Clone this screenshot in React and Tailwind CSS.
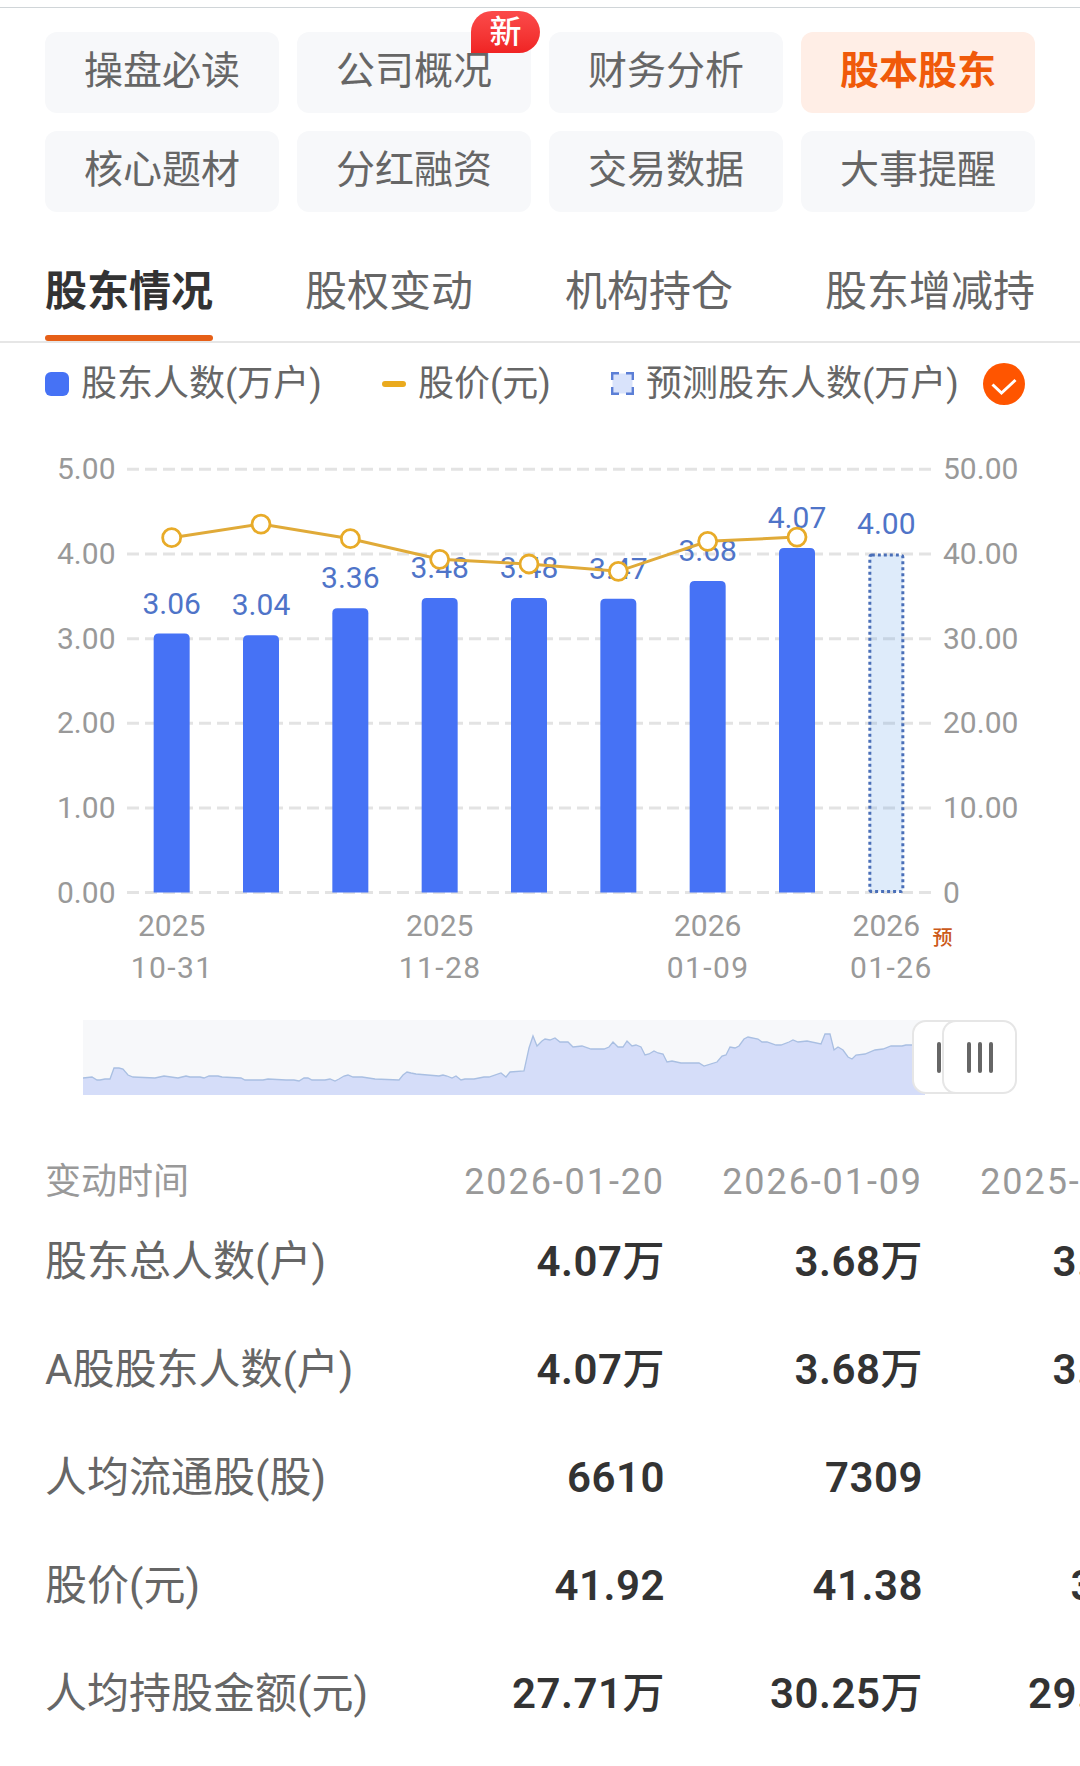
import { clsx } from "clsx";

const MENU = [
  { label: "操盘必读" },
  { label: "公司概况", isNew: true },
  { label: "财务分析" },
  { label: "股本股东", active: true },
  { label: "核心题材" },
  { label: "分红融资" },
  { label: "交易数据" },
  { label: "大事提醒" },
];

const TABS = ["股东情况", "股权变动", "机构持仓", "股东增减持"];

const POINTS = [
  { count: 3.06, price: 41.93, date: ["2025", "10-31"] },
  { count: 3.04, price: 43.54 },
  { count: 3.36, price: 41.81 },
  { count: 3.48, price: 39.37, date: ["2025", "11-28"] },
  { count: 3.48, price: 38.82 },
  { count: 3.47, price: 37.95 },
  { count: 3.68, price: 41.5, date: ["2026", "01-09"] },
  { count: 4.07, price: 42.0 },
];

const TABLE = [
  { label: "股东总人数(户)", values: ["4.07", "3.68", "3.47"], unit: "万" },
  { label: "A股股东人数(户)", values: ["4.07", "3.68", "3.47"], unit: "万" },
  { label: "人均流通股(股)", values: ["6610", "7309", "7752"] },
  { label: "股价(元)", values: ["41.92", "41.38", "37.95"] },
  { label: "人均持股金额(元)", values: ["27.71", "30.25", "29.42"], unit: "万" },
];

const HISTORY =
  "0,58 9,57 14,60 17,60 22,59 27,59 31,48 36,48 40,49 45,55 50,57 72,58 81,56 95,58 103,56 107,57 117,57 121,58 126,56 135,56 139,57 158,58 162,60 180,60 185,59 203,60 211,60 216,61 221,58 225,58 229,60 242,60 247,59 252,61 256,59 261,56 265,55 270,57 279,57 292,59 316,60 320,55 324,52 328,53 333,54 356,56 360,55 364,56 369,58 373,56 378,60 382,59 391,59 401,57 406,57 418,53 423,57 427,52 441,51 446,28 450,16 454,26 459,21 462,19 467,20 472,18 477,22 485,22 490,27 499,26 508,29 521,29 526,27 530,22 535,27 540,27 544,21 549,26 553,25 558,27 562,35 566,34 571,31 575,33 580,34 584,42 589,41 598,43 616,43 621,46 634,42 639,36 643,35 647,27 652,28 656,26 661,19 665,17 675,19 679,22 684,22 693,25 698,25 706,22 710,20 715,22 724,21 738,24 742,14 747,14 751,30 755,27 760,30 765,37 769,39 773,35 782,34 792,30 800,29 808,26 819,26 823,25 842,25";

// chart geometry
const LEFT = 127;
const RIGHT = 931;
const BASE = 472.6;
const UNIT = 84.65;
const STEP = (RIGHT - LEFT) / 9;

const cx = (i) => LEFT + STEP * (i + 0.5);
const cy = (v) => BASE - v * UNIT;

function Menu() {
  return (
    <div className="grid grid-cols-4 gap-[18px] px-[45px] pt-6">
      {MENU.map((m) => (
        <div
          key={m.label}
          className={clsx(
            "relative flex h-[81px] items-center justify-center rounded-xl pb-0.5 text-[39px] leading-none",
            m.active ? "bg-[#ffeee6] font-bold text-[#f05a0a]" : "bg-[#f7f8fa] text-[#666]"
          )}
        >
          {m.label}
          {m.isNew && (
            <span className="absolute -top-[21px] -right-[9px] flex h-[42px] w-[69px] items-center justify-center rounded-[21px] rounded-bl-none bg-gradient-to-b from-[#fb4a4a] to-[#f02323] text-[32px] font-medium text-white">
              新
            </span>
          )}
        </div>
      ))}
    </div>
  );
}

function Tabs() {
  return (
    <div className="mt-[43px] flex h-[88px] justify-between border-b-2 border-[#e6e6e6] px-[45px]">
      {TABS.map((t, i) => (
        <div key={t} className="flex flex-col justify-between text-[42px]">
          <span className={clsx("pt-4 leading-[42px]", i === 0 ? "font-bold text-[#333]" : "text-[#666]")}>{t}</span>
          {i === 0 && <span className="h-[6px] rounded-full bg-[#e65f17]" />}
        </div>
      ))}
    </div>
  );
}

function Legend() {
  return (
    <div className="flex h-[77px] items-center pt-1 pl-[45px] text-[36px] leading-none text-[#666]">
      <span className="h-6 w-6 rounded-md bg-[#4672f5]" />
      <span className="ml-3 w-[301px]">股东人数(万户)</span>
      <span className="h-[6px] w-6 rounded-full bg-[#eaaa1e]" />
      <span className="ml-3 w-[193px]">股价(元)</span>
      <svg width="23" height="23" viewBox="0 0 23 23">
        <rect x="1.5" y="1.5" width="20" height="20" fill="#d9e3fb" />
        <path d="M1.2 8V1.2H8M15 1.2h6.8V8M21.8 15v6.8H15M8 21.8H1.2V15" fill="none" stroke="#5c7fd6" strokeWidth="2.4" />
      </svg>
      <span className="ml-3 w-[337px]">预测股东人数(万户)</span>
      <svg width="42" height="42" viewBox="0 0 42 42">
        <circle cx="21" cy="21" r="21" fill="#ff5500" />
        <path d="M9.5 21.5L18.5 30L32.5 17" fill="none" stroke="#fff" strokeWidth="3" />
      </svg>
    </div>
  );
}

function Chart() {
  return (
    <svg width="1080" height="580" viewBox="0 0 1080 580" className="block" fontSize="30" fill="#999">
      {[0, 1, 2, 3, 4, 5].map((v) => (
        <g key={v}>
          <line x1={LEFT} x2={RIGHT} y1={cy(v)} y2={cy(v)} stroke="#e3e3e3" strokeWidth="3" strokeDasharray="12 6" />
          <text x="115.5" y={cy(v) + 10} textAnchor="end">{v.toFixed(2)}</text>
          <text x="943" y={cy(v) + 10}>{v === 0 ? "0" : (v * 10).toFixed(2)}</text>
        </g>
      ))}

      {POINTS.map((p, i) => (
        <g key={i}>
          <path
            d={`M${cx(i) - 18} ${BASE}V${cy(p.count) + 5}q0 -5 5 -5h26q5 0 5 5V${BASE}z`}
            fill="#4672f5"
          />
          <text x={cx(i)} y={cy(p.count) - 20} textAnchor="middle" fill="#4f74c8">{p.count.toFixed(2)}</text>
          {p.date && (
            <g textAnchor="middle">
              <text x={cx(i)} y="516">{p.date[0]}</text>
              <text x={cx(i) + 0.5} y="558" letterSpacing="1.4">{p.date[1]}</text>
            </g>
          )}
        </g>
      ))}

      {/* forecast */}
      <rect x={cx(8) - 16.5} y={cy(4) + 1} width="33" height={4 * UNIT - 2} rx="2" fill="#4a90e2" fillOpacity="0.18" stroke="#4a6fb8" strokeWidth="3" strokeDasharray="3 3" />
      <text x={cx(8)} y={cy(4) - 20} textAnchor="middle" fill="#4f74c8">4.00</text>
      <g textAnchor="middle">
        <text x={cx(8)} y="516">2026</text>
        <text x={cx(8) + 5} y="558" letterSpacing="1.4">01-26</text>
      </g>
      <text x="932.5" y="524.5" fontSize="20" fill="#cc5a1a" fontWeight="500">预</text>

      <polyline points={POINTS.map((p, i) => `${cx(i)},${cy(p.price / 10)}`).join(" ")} fill="none" stroke="#e0aa38" strokeWidth="3" />
      {POINTS.map((p, i) => (
        <circle key={i} cx={cx(i)} cy={cy(p.price / 10)} r="9" fill="#fff" stroke="#e8ab28" strokeWidth="2.8" />
      ))}
    </svg>
  );
}

function Handle({ className }) {
  return (
    <div className={clsx("absolute top-0 flex h-[74px] w-[75px] items-center justify-center gap-[7px] rounded-[14px] border-2 border-[#e6e6e6] bg-white", className)}>
      <span className="h-[31px] w-1 rounded-full bg-[#666]" />
      <span className="h-[31px] w-1 rounded-full bg-[#666]" />
      <span className="h-[31px] w-1 rounded-full bg-[#666]" />
    </div>
  );
}

function RangeSlider() {
  return (
    <div className="relative mt-5 ml-[83px] h-[75px] w-[934px]">
      <svg width="842" height="75" viewBox="0 0 842 75" className="block bg-[#f7f8fa]">
        <polygon points={`0,75 ${HISTORY} 842,75`} fill="#d5ddf9" />
        <polyline points={HISTORY} fill="none" stroke="#a9bfe2" strokeWidth="1.3" />
      </svg>
      <Handle className="left-[829px]" />
      <Handle className="left-[859px]" />
    </div>
  );
}

function HolderTable() {
  return (
    <div className="mt-[60px] pl-[45px]">
      <div className="grid h-[53px] grid-cols-[362px_258px_258px_258px] items-center text-[36px] leading-none text-[#999]">
        <span>变动时间</span>
        {["2026-01-20", "2026-01-09", "2025-12-31"].map((d) => (
          <span key={d} className="text-right tracking-[1.9px]">{d}</span>
        ))}
      </div>
      {TABLE.map((row) => (
        <div key={row.label} className="grid h-[108px] grid-cols-[362px_258px_258px_258px] items-center text-[42px] leading-none">
          <span className="whitespace-nowrap text-[#666]">{row.label}</span>
          {row.values.map((v, i) => (
            <span key={i} className="text-right font-semibold tracking-[0.5px] text-[#333]">
              {v}
              {row.unit && <span className="font-medium">{row.unit}</span>}
            </span>
          ))}
        </div>
      ))}
    </div>
  );
}

export default function App() {
  return (
    <div className="h-[1766px] w-[1080px] overflow-hidden bg-white font-[Roboto,'Noto_Sans_CJK_SC',sans-serif]">
      <div className="mt-[7px] h-px bg-[#d0d5d8]" />
      <Menu />
      <Tabs />
      <Legend />
      <Chart />
      <RangeSlider />
      <HolderTable />
    </div>
  );
}
